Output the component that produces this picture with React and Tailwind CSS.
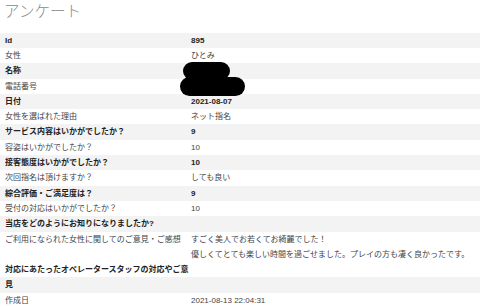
import React from 'react';

const rows = [
  { label: 'Id', value: '895' },
  { label: '女性', value: 'ひとみ' },
  { label: '名称', value: '' },
  { label: '電話番号', value: '' },
  { label: '日付', value: '2021-08-07' },
  { label: '女性を選ばれた理由', value: 'ネット指名' },
  { label: 'サービス内容はいかがでしたか？', value: '9' },
  { label: '容姿はいかがでしたか？', value: '10' },
  { label: '接客態度はいかがでしたか？', value: '10' },
  { label: '次回指名は頂けますか？', value: 'しても良い' },
  { label: '綜合評価・ご満足度は？', value: '9' },
  { label: '受付の対応はいかがでしたか？', value: '10' },
  { label: '当店をどのようにお知りになりましたか?', value: '' },
  {
    label: 'ご利用になられた女性に関してのご意見・ご感想',
    value: ['すごく美人でお若くてお綺麗でした！', '優しくてとても楽しい時間を過ごせました。プレイの方も凄く良かったです。'],
  },
];

const Row = ({ label, value, striped }) => {
  const lines = Array.isArray(value) ? value : [value];
  return (
    <div className={`flex ${striped ? 'bg-[#f3f3f3] font-bold text-[#222]' : 'text-[#444]'}`}>
      <div className="w-[191px] shrink-0 pl-[5px] whitespace-nowrap">{label}</div>
      <div className="flex-1 whitespace-nowrap">
        {lines.map((line, i) => (
          <div key={i} className="h-[15.3px]">{line}</div>
        ))}
      </div>
    </div>
  );
};

export default function App() {
  return (
    <div className="w-[480px] h-[307px] overflow-hidden bg-white font-['Liberation_Sans','Noto_Sans_CJK_JP',sans-serif]">
      <h1 className="h-[32.7px] pl-[4px] pt-[2px] text-[15.5px] leading-[20px] font-light text-[#888]">アンケート</h1>

      <div className="relative text-[8px] leading-[15.3px]">
        {rows.map((row, i) => (
          <Row key={i} label={row.label} value={row.value} striped={i % 2 === 0} />
        ))}

        {/* last long label wraps onto a second line */}
        <div className="h-[15.3px] pl-[5px] font-bold text-[#222] whitespace-nowrap">
          対応にあたったオペレータースタッフの対応やご意
        </div>
        <div className="h-[15.3px] pl-[5px] bg-[#f3f3f3] font-bold text-[#222]">見</div>
        <Row label="作成日" value="2021-08-13 22:04:31" striped={false} />

        {/* redaction over name / phone */}
        <svg className="absolute left-[180px] top-[29px] w-[66px] h-[36px]" viewBox="0 0 66 36">
          <rect x="3" y="0" width="47" height="18" rx="9" fill="#000" />
          <rect x="0" y="15" width="65" height="19" rx="9.5" fill="#000" />
        </svg>
      </div>
    </div>
  );
}
